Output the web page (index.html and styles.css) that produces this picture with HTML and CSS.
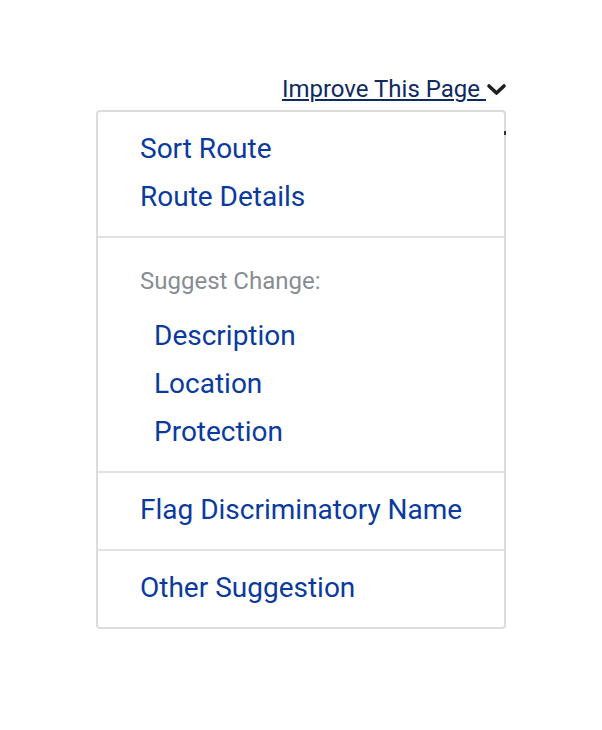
FILE: index.html
```html
<!DOCTYPE html>
<html lang="en">
<head>
<meta charset="utf-8">
<title>Improve This Page</title>
<link rel="stylesheet" href="styles.css">
</head>
<body>
<div class="wrap">
  <div class="toggle-row">
    <a class="toggle" href="#"><span class="toggle-text">Improve This Page&nbsp;</span><svg class="chev" width="21" height="14" viewBox="0 0 21 14" aria-hidden="true"><path d="M3 3 L10.5 10 L18 3" fill="none" stroke="#1f1f1f" stroke-width="3.6" stroke-linecap="round" stroke-linejoin="round"/></svg></a>
  </div>
  <div class="menu">
    <div class="section">
      <a class="item" href="#">Sort Route</a>
      <a class="item" href="#">Route Details</a>
    </div>
    <div class="section">
      <div class="label">Suggest Change:</div>
      <a class="item sub" href="#">Description</a>
      <a class="item sub" href="#">Location</a>
      <a class="item sub" href="#">Protection</a>
    </div>
    <div class="section">
      <a class="item" href="#">Flag Discriminatory Name</a>
    </div>
    <div class="section">
      <a class="item" href="#">Other Suggestion</a>
    </div>
  </div>
</div>
</body>
</html>
```
FILE: styles.css
```css
html, body {
  margin: 0;
  padding: 0;
  background: #ffffff;
}
body {
  font-family: Roboto, "Liberation Sans", Arial, sans-serif;
}
.wrap {
  margin-left: 96px;
  width: 410px;
  padding-top: 75px;
  display: flex;
  flex-direction: column;
}
.toggle-row {
  display: flex;
  justify-content: flex-end;
  margin-right: -1px;
  height: 35px;
}
.toggle {
  display: flex;
  align-items: center;
  height: 28px;
  font-size: 24px;
  line-height: 28px;
  color: #0f2a5e;
  text-decoration: none;
}
.toggle-text {
  text-decoration: underline;
  text-decoration-thickness: 2px;
  text-underline-offset: 2px;
  white-space: pre;
}
.chev {
  display: block;
  margin-top: 1px;
}
.menu {
  position: relative;
  border: 2px solid #dcdcdc;
  border-radius: 4px;
  background: #ffffff;
}
.menu::after {
  content: "";
  position: absolute;
  right: -2px;
  top: 19px;
  width: 2px;
  height: 4px;
  background: #333333;
}
.section {
  display: flex;
  flex-direction: column;
  align-items: flex-start;
  padding: 13px 0 15px 42px;
}
.section + .section {
  border-top: 2px solid #e2e2e2;
}
.item {
  font-size: 28px;
  line-height: 48px;
  color: #0b3a9e;
  text-decoration: none;
}
.item.sub {
  margin-left: 14px;
}
.label {
  font-size: 24px;
  line-height: 32px;
  color: #878d94;
  margin: 14px 0 15px;
}
```
